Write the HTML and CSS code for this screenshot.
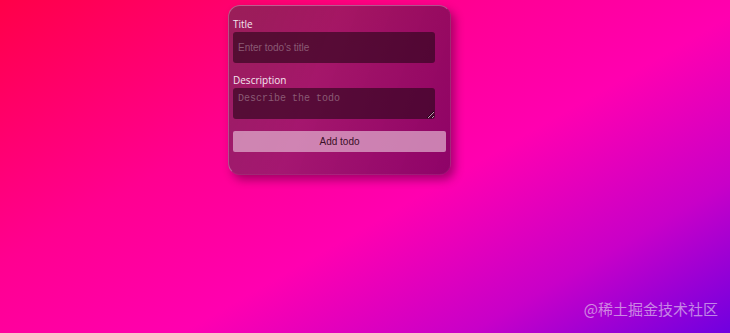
FILE: index.html
```html
<!doctype html>
<html>
    <head>
        <meta charset="utf-8"/>
        <link rel="stylesheet" href="styles.css">
    </head>
    <body>
        <main>
            <form class="todo-card">
                <label class="field-label" for="title">Title</label>
                <input class="field-input" id="title" type="text" placeholder="Enter todo's title">
                <label class="field-label" for="desc">Description</label>
                <textarea class="field-input field-area" id="desc" placeholder="Describe the todo"></textarea>
                <button class="add-btn" type="button">Add todo</button>
            </form>
        </main>
        <div class="watermark">@稀土掘金技术社区</div>
    </body>
</html>
```

FILE: styles.css
```css
:root {
    --label: #f4e6ee;
    --field: rgba(40, 5, 25, 0.62);
    --placeholder: #8a5a74;
    --button: rgba(225, 175, 205, 0.72);
}
html, body {
    height: 100%;
}
body {
    margin: 0;
    overflow: hidden;
    background: linear-gradient(150deg, #ff0048 0%, #ff0090 35%, #ff00b0 58%, #c800c8 80%, #7000e0 100%);
    font-family: "Open Sans", "Noto Sans", sans-serif;
}
main {
    display: flex;
    padding: 5px 0 0 228px;
}
.todo-card {
    display: flex;
    flex-direction: column;
    align-items: flex-start;
    width: 213px;
    padding: 11px 4px 22px 4px;
    border-radius: 12px;
    border: 1px solid rgba(255, 255, 255, 0.3);
    border-right-color: rgba(255, 255, 255, 0.05);
    border-bottom-color: rgba(255, 255, 255, 0.05);
    background: linear-gradient(110deg, rgba(70, 55, 70, 0.55) 0%, rgba(75, 45, 70, 0.5) 40%, rgba(40, 5, 40, 0.52) 100%);
    box-shadow: 4px 5px 10px rgba(60, 0, 40, 0.45);
}
.field-label {
    font-size: 10px;
    line-height: 14px;
    color: var(--label);
    margin-bottom: 1px;
}
.field-input {
    box-sizing: border-box;
    width: 202px;
    height: 31px;
    padding: 0 5px;
    border: none;
    border-radius: 3px;
    background: var(--field);
    color: var(--label);
    font-family: "Liberation Sans", Arial, sans-serif;
    font-size: 10px;
    outline: none;
    margin-bottom: 10px;
}
.field-input::placeholder {
    color: var(--placeholder);
}
.field-area {
    padding: 5px;
    font-family: "Liberation Mono", "DejaVu Sans Mono", monospace;
    font-size: 10px;
    margin-bottom: 12px;
    resize: vertical;
}
.add-btn {
    width: 213px;
    height: 21px;
    border: none;
    border-radius: 2px;
    background: var(--button);
    color: #3a1028;
    font-family: "Liberation Sans", Arial, sans-serif;
    font-size: 10px;
}
.watermark {
    position: absolute;
    right: 12px;
    bottom: 14px;
    font-family: "Noto Sans CJK SC", sans-serif;
    font-size: 15px;
    color: rgba(235, 225, 240, 0.6);
}
```
